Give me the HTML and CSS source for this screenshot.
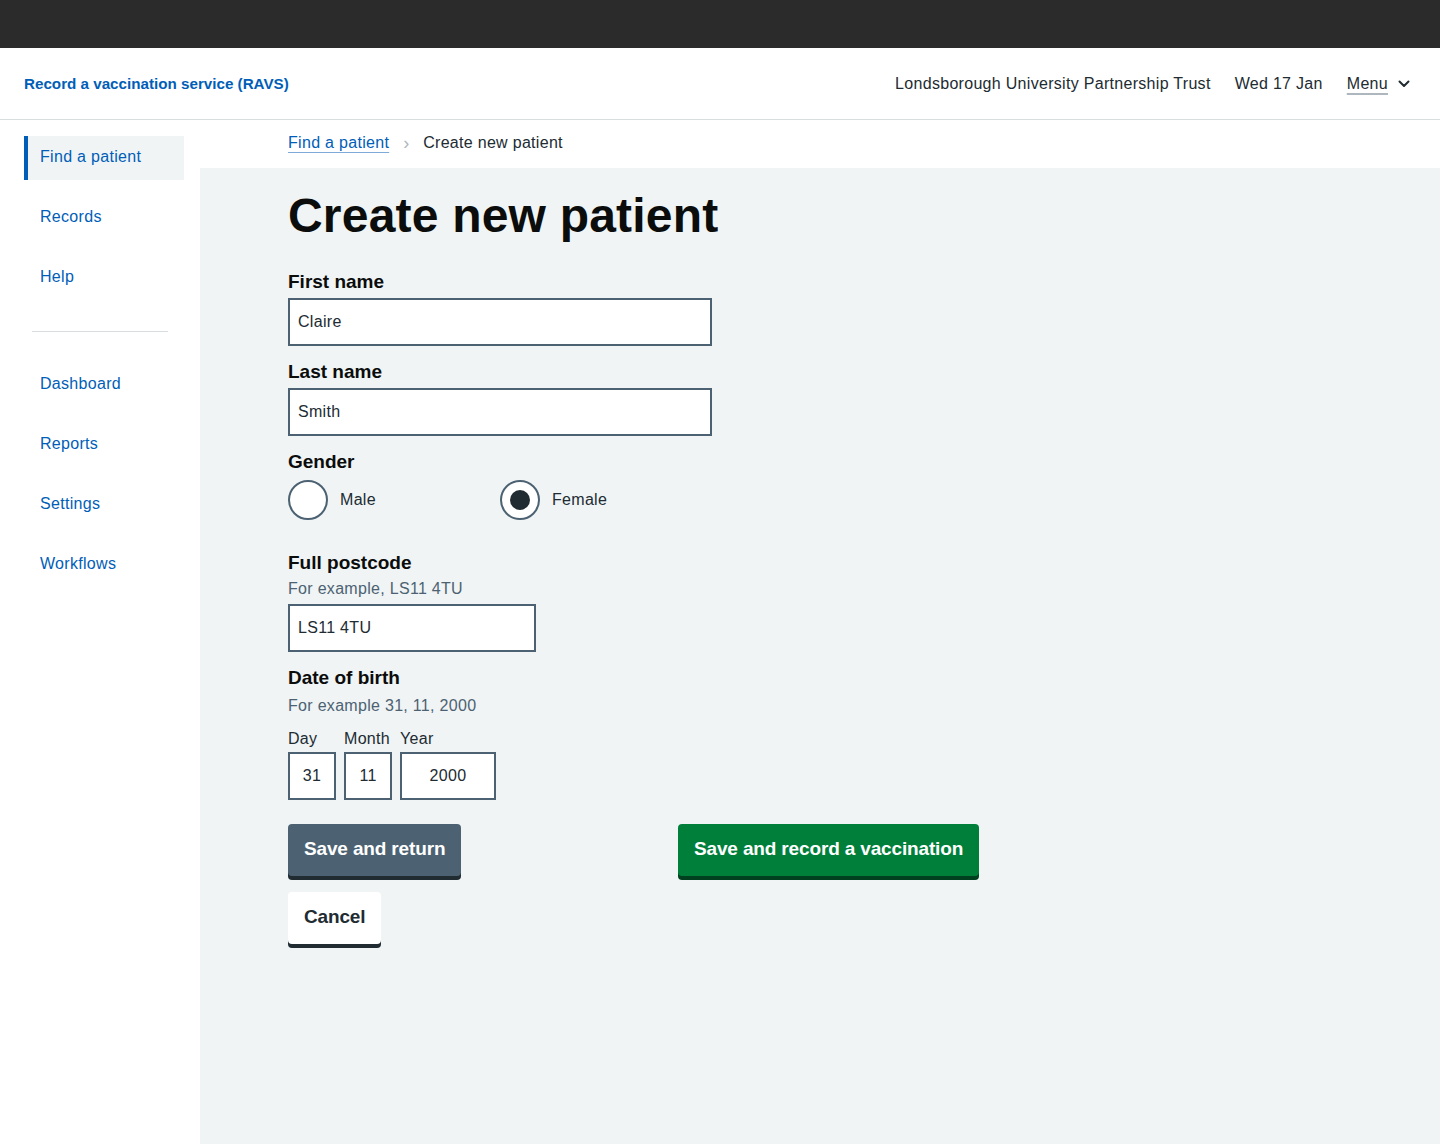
FILE: index.html
```html
<!DOCTYPE html>
<html lang="en">
<head>
<meta charset="utf-8">
<title>Create new patient - RAVS</title>
<link rel="stylesheet" href="styles.css">
</head>
<body>
<div class="topbar"></div>
<header class="header">
  <a class="service" href="#">Record a vaccination service (RAVS)</a>
  <div class="header-right">
    <span class="org">Londsborough University Partnership Trust</span>
    <span class="date">Wed 17 Jan</span>
    <a class="menu" href="#"><span class="menu-text">Menu</span>
      <svg class="chev" width="14" height="14" viewBox="0 0 14 14" aria-hidden="true"><path d="M2.5 4.5 L7 9 L11.5 4.5" fill="none" stroke="#212b32" stroke-width="2" stroke-linecap="round" stroke-linejoin="round"/></svg>
    </a>
  </div>
</header>
<div class="layout">
  <nav class="sidebar">
    <a class="nav-item active" href="#">Find a patient</a>
    <a class="nav-item" href="#">Records</a>
    <a class="nav-item" href="#">Help</a>
    <hr class="nav-divider">
    <a class="nav-item" href="#">Dashboard</a>
    <a class="nav-item" href="#">Reports</a>
    <a class="nav-item" href="#">Settings</a>
    <a class="nav-item" href="#">Workflows</a>
  </nav>
  <main class="main">
    <div class="breadcrumb">
      <a class="crumb-link" href="#">Find a patient</a>
      <span class="crumb-sep">›</span>
      <span class="crumb-current">Create new patient</span>
    </div>
    <div class="panel">
      <h1 class="title">Create new patient</h1>
      <form class="form">
        <div class="field">
          <label class="label">First name</label>
          <div class="input wide">Claire</div>
        </div>
        <div class="field">
          <label class="label">Last name</label>
          <div class="input wide">Smith</div>
        </div>
        <div class="field">
          <div class="label">Gender</div>
          <div class="radios">
            <div class="radio-item"><span class="radio"></span><span class="radio-label">Male</span></div>
            <div class="radio-item"><span class="radio checked"></span><span class="radio-label">Female</span></div>
          </div>
        </div>
        <div class="field postcode">
          <label class="label">Full postcode</label>
          <div class="hint">For example, LS11 4TU</div>
          <div class="input medium">LS11 4TU</div>
        </div>
        <div class="field dob">
          <div class="label">Date of birth</div>
          <div class="hint dob-hint">For example 31, 11, 2000</div>
          <div class="date-row">
            <div class="date-part"><div class="date-label">Day</div><div class="input date-input small">31</div></div>
            <div class="date-part"><div class="date-label">Month</div><div class="input date-input small">11</div></div>
            <div class="date-part"><div class="date-label">Year</div><div class="input date-input year">2000</div></div>
          </div>
        </div>
        <div class="actions">
          <div class="action-col"><button type="button" class="btn btn-secondary">Save and return</button></div>
          <div class="action-col"><button type="button" class="btn btn-primary">Save and record a vaccination</button></div>
        </div>
        <div class="actions-cancel">
          <button type="button" class="btn btn-white">Cancel</button>
        </div>
      </form>
    </div>
  </main>
</div>
</body>
</html>
```
FILE: styles.css
```css
* { box-sizing: border-box; }
html, body { margin: 0; padding: 0; }
body {
  font-family: "Liberation Sans", Arial, sans-serif;
  color: #212b32;
  background: #ffffff;
  font-size: 16px;
  line-height: 24px;
  min-height: 1144px;
  display: flex;
  flex-direction: column;
}
a { text-decoration: none; }

.topbar { height: 48px; background: #2b2b2b; }

.header {
  height: 72px;
  border-bottom: 1px solid #d8dde0;
  display: flex;
  align-items: center;
  justify-content: space-between;
  padding: 0 29px 0 24px;
}
.service {
  color: #005eb8;
  font-weight: bold;
  font-size: 15.2px;
}
.header-right {
  display: flex;
  align-items: center;
  gap: 24px;
  font-size: 16px;
  color: #212b32;
}
.org, .date { letter-spacing: 0.3px; }
.menu {
  color: #212b32;
  display: flex;
  align-items: center;
  gap: 9px;
}
.menu-text {
  text-decoration: underline;
  text-decoration-color: #aeb7bd;
  text-decoration-thickness: 2px;
  text-underline-offset: 4px;
  letter-spacing: 0.3px;
}
.chev { display: block; }

.layout {
  flex: 1;
  display: grid;
  grid-template-columns: 200px 1fr;
}
.sidebar {
  display: flex;
  flex-direction: column;
  padding-top: 16px;
}
.nav-item {
  display: flex;
  align-items: center;
  height: 44px;
  margin: 0 16px 16px 24px;
  padding-left: 12px;
  padding-bottom: 2px;
  border-left: 4px solid transparent;
  color: #005eb8;
  font-size: 16px;
  letter-spacing: 0.3px;
}
.nav-item.active {
  background: #f0f4f5;
  border-left-color: #005eb8;
}
.nav-divider {
  border: 0;
  border-top: 1px solid #d8dde0;
  margin: 15px 32px 31px 32px;
  height: 0;
}

.main {
  display: flex;
  flex-direction: column;
}
.breadcrumb {
  height: 48px;
  display: flex;
  align-items: center;
  padding-left: 88px;
  font-size: 16px;
  gap: 12px;
  padding-bottom: 2px;
}
.crumb-link {
  color: #005eb8;
  text-decoration: underline;
  text-decoration-color: #7fa9d8;
  text-underline-offset: 4px;
  letter-spacing: 0.3px;
}
.crumb-sep { color: #aeb7bd; font-size: 18px; margin: 0 2px; }
.crumb-current { color: #212b32; letter-spacing: 0.3px; }

.panel {
  flex: 1;
  background: #f0f4f5;
  padding: 19px 88px 40px 88px;
}
.title {
  margin: 0;
  font-size: 48px;
  line-height: 58px;
  font-weight: bold;
  color: #0b0c0c;
  letter-spacing: 0.2px;
}
.form { margin-top: 23px; }
.field { margin-bottom: 12px; }
.label {
  display: block;
  font-size: 19px;
  font-weight: bold;
  line-height: 28px;
  color: #0b0c0c;
  margin-bottom: 2px;
}
.hint {
  color: #4c6272;
  font-size: 16px;
  line-height: 24px;
  letter-spacing: 0.3px;
  margin-top: -2px;
  margin-bottom: 3px;
}
.dob { margin-top: 1px; }
.dob-hint { margin-top: 0; }
.input {
  height: 48px;
  border: 2px solid #4c6272;
  background: #ffffff;
  padding: 0 8px;
  display: flex;
  align-items: center;
  font-size: 16px;
  color: #212b32;
  letter-spacing: 0.3px;
}
.wide { width: 424px; }
.medium { width: 248px; }

.radios {
  display: grid;
  grid-template-columns: 212px 212px;
  margin-top: 4px;
}
.radio-item {
  display: flex;
  align-items: center;
  gap: 12px;
  height: 40px;
}
.radio {
  width: 40px;
  height: 40px;
  border-radius: 50%;
  border: 2px solid #4c6272;
  background: #ffffff;
  display: flex;
  align-items: center;
  justify-content: center;
}
.radio.checked::after {
  content: "";
  width: 20px;
  height: 20px;
  border-radius: 50%;
  background: #212b32;
}
.radio-label { font-size: 16px; letter-spacing: 0.3px; }
.postcode { margin-top: 29px; }

.date-row { display: flex; gap: 8px; margin-top: 9px; }
.date-label { font-size: 16px; line-height: 24px; margin-bottom: 1px; letter-spacing: 0.3px; }
.date-input { justify-content: center; padding: 0; }
.small { width: 48px; }
.year { width: 96px; }

.actions {
  display: grid;
  grid-template-columns: 390px auto;
  margin-top: 24px;
  align-items: start;
}
.actions-cancel { margin-top: 12px; }
.btn {
  font-family: "Liberation Sans", Arial, sans-serif;
  font-size: 19px;
  font-weight: bold;
  line-height: 24px;
  letter-spacing: -0.15px;
  height: 52px;
  padding: 0 16px 2px 16px;
  border: 0;
  border-radius: 4px;
  cursor: pointer;
  margin: 0 0 4px 0;
}
.btn-secondary { background: #4c6272; color: #ffffff; box-shadow: 0 4px 0 #212b32; }
.btn-primary { background: #007f3b; color: #ffffff; box-shadow: 0 4px 0 #00401e; }
.btn-white { background: #ffffff; color: #212b32; box-shadow: 0 4px 0 #212b32; }
```
